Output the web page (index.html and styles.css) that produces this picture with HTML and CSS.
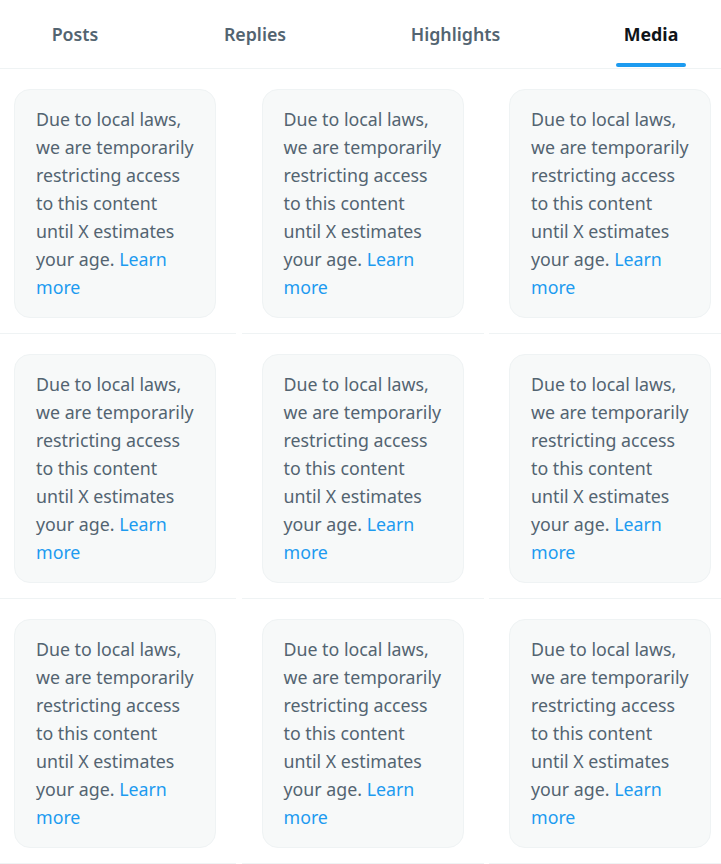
FILE: index.html
```html
<!DOCTYPE html>
<html lang="en">
<head>
<meta charset="utf-8">
<title>Media</title>
<link rel="stylesheet" href="styles.css">
</head>
<body>
<div class="page">
  <nav class="tabs">
    <a class="tab tab-posts"><span class="tab-label">Posts</span></a>
    <a class="tab tab-replies"><span class="tab-label">Replies</span></a>
    <a class="tab tab-highlights"><span class="tab-label">Highlights</span></a>
    <a class="tab tab-media active"><span class="tab-label">Media<span class="indicator"></span></span></a>
  </nav>
  <div class="grid">
    <div class="cell"><div class="notice">Due to local laws, we are temporarily restricting access to this content until X estimates your age. <a class="link">Learn</a> <a class="link">more</a></div></div>
    <div class="cell"><div class="notice">Due to local laws, we are temporarily restricting access to this content until X estimates your age. <a class="link">Learn</a> <a class="link">more</a></div></div>
    <div class="cell"><div class="notice">Due to local laws, we are temporarily restricting access to this content until X estimates your age. <a class="link">Learn</a> <a class="link">more</a></div></div>
    <div class="cell"><div class="notice">Due to local laws, we are temporarily restricting access to this content until X estimates your age. <a class="link">Learn</a> <a class="link">more</a></div></div>
    <div class="cell"><div class="notice">Due to local laws, we are temporarily restricting access to this content until X estimates your age. <a class="link">Learn</a> <a class="link">more</a></div></div>
    <div class="cell"><div class="notice">Due to local laws, we are temporarily restricting access to this content until X estimates your age. <a class="link">Learn</a> <a class="link">more</a></div></div>
    <div class="cell"><div class="notice">Due to local laws, we are temporarily restricting access to this content until X estimates your age. <a class="link">Learn</a> <a class="link">more</a></div></div>
    <div class="cell"><div class="notice">Due to local laws, we are temporarily restricting access to this content until X estimates your age. <a class="link">Learn</a> <a class="link">more</a></div></div>
    <div class="cell"><div class="notice">Due to local laws, we are temporarily restricting access to this content until X estimates your age. <a class="link">Learn</a> <a class="link">more</a></div></div>
  </div>
</div>
</body>
</html>
```
FILE: styles.css
```css
html, body {
  margin: 0;
  padding: 0;
  background: #ffffff;
  overflow: hidden;
}
body {
  font-family: "Noto Sans", "Open Sans", sans-serif;
  color: #536471;
}
.page {
  width: 721px;
  overflow: hidden;
}
.tabs {
  display: flex;
  height: 68px;
  margin-left: -11px;
  border-bottom: 1px solid #eff3f4;
  width: 751px;
}
.tab {
  display: flex;
  align-items: center;
  justify-content: center;
  height: 68px;
  font-size: 17.8px;
  font-weight: 600;
  color: #536471;
}
.tab-posts { width: 172px; }
.tab-replies { width: 188px; }
.tab-highlights { width: 213px; }
.tab-media { width: 178px; }
.tab-label {
  position: relative;
  height: 68px;
  display: flex;
  align-items: center;
}
.active {
  color: #0f1419;
  font-weight: 700;
}
.indicator {
  position: absolute;
  left: -8px;
  right: -8px;
  bottom: 1px;
  height: 4px;
  border-radius: 4px;
  background: #1d9bf0;
}
.grid {
  display: grid;
  grid-template-columns: 242px 242px 242px;
  column-gap: 5.5px;
  margin-left: -6px;
  width: 737px;
}
.cell {
  padding: 20px 20px 15px 20px;
  border-bottom: 1px solid #eff3f4;
}
.notice {
  box-sizing: border-box;
  height: 229px;
  background: #f7f9f9;
  border: 1px solid #eff3f4;
  border-radius: 16px;
  padding: 15px 20px 15px 21px;
  font-size: 17.8px;
  line-height: 28px;
  color: #536471;
}
.link {
  color: #1d9bf0;
}
```
